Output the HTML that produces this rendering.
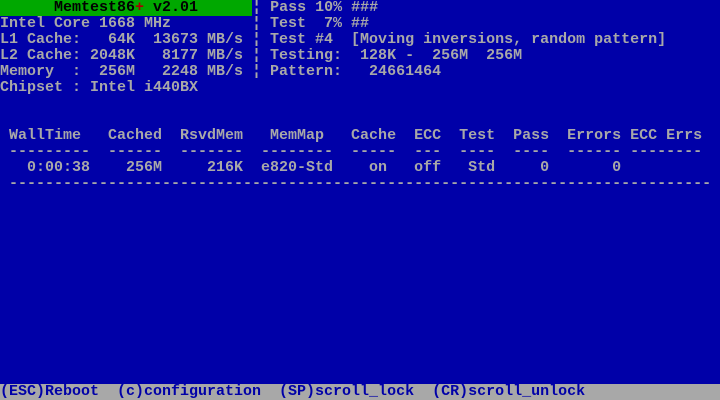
<!DOCTYPE html>
<html><head><meta charset="utf-8"><style>
html,body{margin:0;padding:0;background:#0000a8;}
body{width:720px;height:400px;overflow:hidden;position:relative;}
pre{margin:0;position:absolute;left:0;font-family:"Liberation Mono",monospace;font-size:15px;line-height:16px;font-weight:bold;color:#a8a8a8;white-space:pre;}
.g{position:absolute;left:0;top:0;width:252px;height:16px;background:#00a800;}
.f{position:absolute;left:0;top:384px;width:720px;height:16px;background:#a8a8a8;}
.k{color:#000;}
.r{color:#a80000;}
.b{color:#0000a8;}
</style></head><body>
<div class="g"></div>
<div class="f"></div>
<pre style="top:0"><span class="k">      Memtest86<span class="r">+</span> v2.01</span>      ¦ Pass 10% ###
Intel Core 1668 MHz         ¦ Test  7% ##
L1 Cache:   64K  13673 MB/s ¦ Test #4  [Moving inversions, random pattern]
L2 Cache: 2048K   8177 MB/s ¦ Testing:  128K -  256M  256M
Memory  :  256M   2248 MB/s ¦ Pattern:   24661464
Chipset : Intel i440BX</pre>
<pre style="top:128px"> WallTime   Cached  RsvdMem   MemMap   Cache  ECC  Test  Pass  Errors ECC Errs
 ---------  ------  -------  --------  -----  ---  ----  ----  ------ --------
   0:00:38    256M     216K  e820-Std    on   off   Std     0       0
 ------------------------------------------------------------------------------</pre>
<pre style="top:384px" class="b">(ESC)Reboot  (c)configuration  (SP)scroll_lock  (CR)scroll_unlock</pre>
</body></html>
